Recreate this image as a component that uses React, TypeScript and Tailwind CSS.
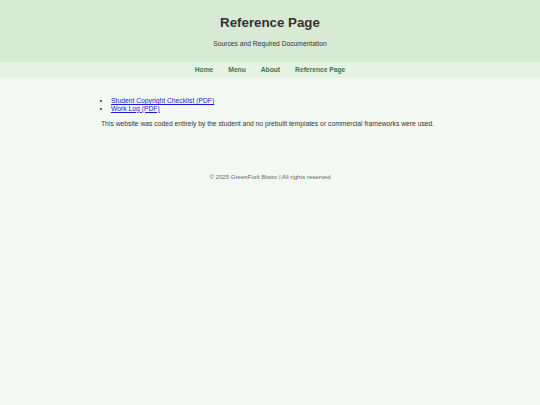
import React from 'react';

const navLinkClass: string = "font-bold text-[#2f7d4e] no-underline";

const App: React.FC = () => {
  return (
    <div className="min-h-screen bg-[#f3f9f2] text-[#333333] font-['Liberation_Sans',Arial,sans-serif]">
      {/* header */}
      <header className="bg-[#d8ead3] text-center pt-[15px] pb-[14px]">
        <h1 className="text-[13.3px] leading-[15px] font-bold text-[#333333]">Reference Page</h1>
        <p className="mt-[10px] text-[6.7px] leading-[8px] text-[#333333]">Sources and Required Documentation</p>
      </header>

      {/* nav */}
      <nav className="bg-[#e5f3e2] h-[16px] flex items-center justify-center gap-[15px] text-[6.7px]">
        <a href="#" className={navLinkClass}>Home</a>
        <a href="#" className={navLinkClass}>Menu</a>
        <a href="#" className={navLinkClass}>About</a>
        <a href="#" className={navLinkClass}>Reference Page</a>
      </nav>

      <main className="w-[338px] mx-auto pt-[19px] text-[6.75px] leading-[7.7px]">
        <ul className="list-disc pl-[10px]">
          <li>
            <a href="#" className="text-[#1a1acc] underline">Student Copyright Checklist (PDF)</a>
          </li>
          <li>
            <a href="#" className="text-[#1a1acc] underline">Work Log (PDF)</a>
          </li>
        </ul>
        <p className="mt-[8px]">
          This website was coded entirely by the student and no prebuilt templates or commercial frameworks were used.
        </p>
      </main>

      <footer className="text-center text-[6.1px] leading-[7px] text-[#666666] mt-[45px]">
        &copy; 2025 GreenFork Bistro | All rights reserved
      </footer>
    </div>
  );
};

export default App;
